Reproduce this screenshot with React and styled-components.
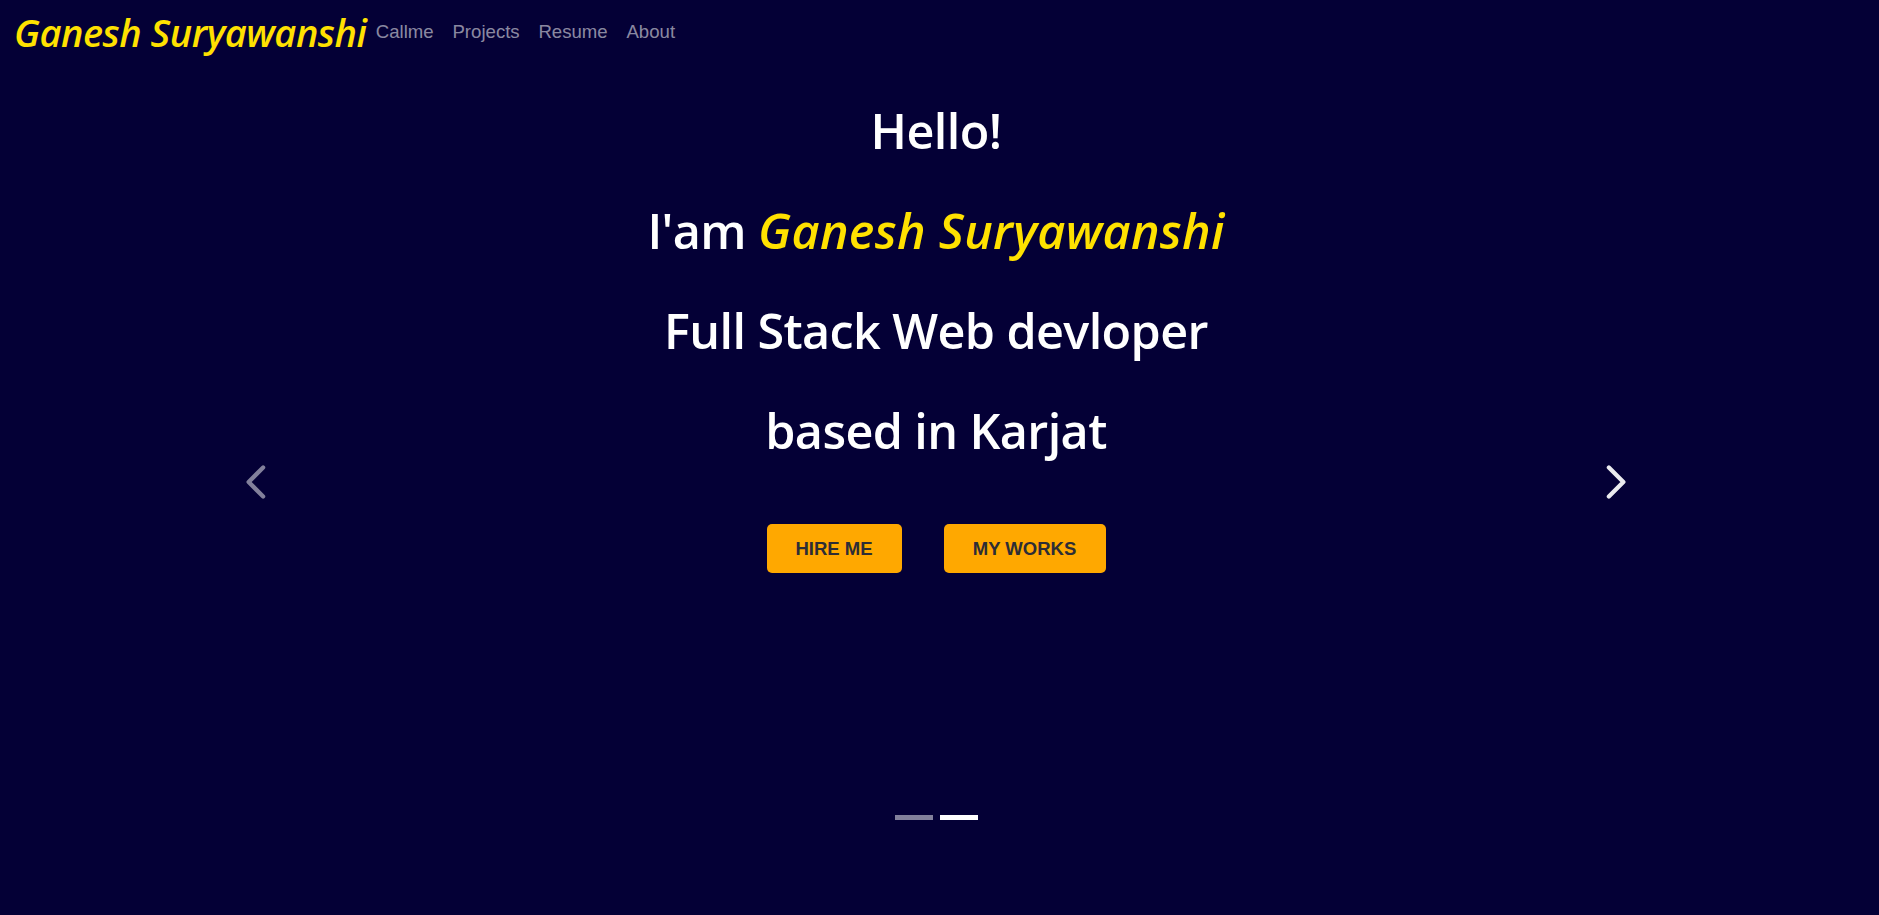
import styled, { createGlobalStyle } from "styled-components";

const GlobalStyle = createGlobalStyle`
  html, body {
    margin: 0;
    padding: 0;
    background: #040036;
  }

  body {
    font-family: "Liberation Sans", Arial, sans-serif;
    min-height: 915px;
  }
`;

const Page = styled.div`
  min-height: 915px;
  background: #040036;
  padding-right: 7px;
  overflow: hidden;
`;

const Navbar = styled.nav`
  display: flex;
  align-items: center;
  height: 64px;
  padding: 0 14px;
`;

const Brand = styled.a`
  font-family: "Open Sans", "Noto Sans", sans-serif;
  font-style: italic;
  font-weight: 600;
  font-size: 38px;
  color: #ffe100;
  text-decoration: none;
  letter-spacing: -0.5px;
`;

const NavLinks = styled.ul`
  display: flex;
  list-style: none;
  margin: 0;
  padding: 0;
`;

const NavLink = styled.a`
  display: block;
  padding: 8px 9.4px;
  font-size: 18.6px;
  color: rgba(255, 255, 255, 0.55);
  text-decoration: none;
`;

const Carousel = styled.section`
  position: relative;
  width: 1600px;
  height: 835px;
  margin: 0 auto;
`;

const Slide = styled.div`
  display: flex;
  flex-direction: column;
  align-items: center;
  padding-top: 16px;
`;

const Line = styled.h2`
  margin: 0;
  font-family: "Open Sans", "Noto Sans", sans-serif;
  font-weight: 600;
  font-size: 48.5px;
  line-height: 100px;
  color: #ffffff;
  letter-spacing: -0.6px;
  text-align: center;
`;

const Name = styled.span`
  font-style: italic;
  color: #ffe100;
  letter-spacing: 0.3px;
`;

const Actions = styled.div`
  display: flex;
  gap: 42px;
  margin-top: 44px;
`;

const Button = styled.a`
  display: flex;
  align-items: center;
  justify-content: center;
  width: ${(p) => p.$width}px;
  height: 49px;
  border-radius: 5px;
  background: #ffa800;
  color: #2d2d36;
  font-weight: 700;
  font-size: 18.5px;
  text-decoration: none;
`;

const Control = styled.button`
  position: absolute;
  top: 0;
  bottom: 0;
  ${(p) => (p.$side === "left" ? "left: 0;" : "right: 0;")}
  width: 15%;
  display: flex;
  align-items: center;
  justify-content: center;
  background: none;
  border: 0;
  padding: 0;
  cursor: pointer;
  color: #ffffff;
  opacity: ${(p) => (p.$active ? 0.92 : 0.5)};

  svg {
    width: 38px;
    height: 38px;
  }
`;

const Indicators = styled.div`
  position: absolute;
  left: 0;
  right: 0;
  bottom: 79px;
  display: flex;
  justify-content: center;
  gap: 7px;
`;

const Dot = styled.span`
  width: 38px;
  height: 5px;
  background: #ffffff;
  opacity: ${(p) => (p.$active ? 1 : 0.5)};
`;

function Chevron({ dir }) {
  const d =
    dir === "left"
      ? "M11 1.9 4.9 8l6.1 6.1"
      : "M5 1.9 11.1 8 5 14.1";
  return (
    <svg viewBox="0 0 16 16" fill="none">
      <path d={d} stroke="currentColor" strokeWidth="1.8" strokeLinecap="round" strokeLinejoin="round" />
    </svg>
  );
}

export default function App() {
  const links = ["Callme", "Projects", "Resume", "About"];

  return (
    <Page>
      <GlobalStyle />
      <Navbar>
        <Brand href="#">Ganesh Suryawanshi</Brand>
        <NavLinks>
          {links.map((l) => (
            <li key={l}>
              <NavLink href="#">{l}</NavLink>
            </li>
          ))}
        </NavLinks>
      </Navbar>
      <Carousel>
        <Slide>
          <Line>Hello!</Line>
          <Line>
            I'am <Name>Ganesh Suryawanshi</Name>
          </Line>
          <Line>Full Stack Web devloper</Line>
          <Line>based in Karjat</Line>
          <Actions>
            <Button href="#" $width={135}>HIRE ME</Button>
            <Button href="#" $width={162}>MY WORKS</Button>
          </Actions>
        </Slide>
        <Control $side="left" aria-label="Previous">
          <Chevron dir="left" />
        </Control>
        <Control $side="right" $active aria-label="Next">
          <Chevron dir="right" />
        </Control>
        <Indicators>
          <Dot />
          <Dot $active />
        </Indicators>
      </Carousel>
    </Page>
  );
}
